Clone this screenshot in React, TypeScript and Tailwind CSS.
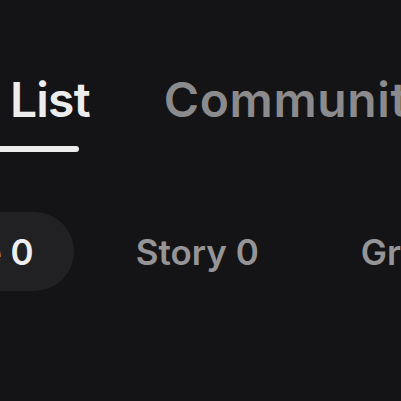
const tabs = [
  { title: "List", active: true },
  { title: "Community", active: false },
];

const filters = [
  { title: "Article", count: 0, active: true },
  { title: "Story", count: 0, active: false },
  { title: "Group", count: 0, active: false },
];

export default function App() {
  return (
    <div
      className="h-[401px] w-[401px] overflow-hidden bg-[#141416]"
      style={{ fontFamily: "Inter, 'Noto Sans', sans-serif" }}
    >
      {/* Tabs */}
      <div className="flex gap-[74px] whitespace-nowrap pl-[10px] pt-[76px]">
        {tabs.map(({ title, active }) => (
          <div key={title} className="relative">
            <span
              className={`block text-[48px] font-semibold leading-none ${
                active
                  ? "tracking-[-0.8px] text-[#ededed]"
                  : "tracking-[0.6px] text-[#8b8b8d]"
              }`}
            >
              {title}
            </span>
            {active && (
              <div className="absolute left-[-40px] top-[70px] h-[6px] w-[109px] rounded-full bg-[#ececec]" />
            )}
          </div>
        ))}
      </div>

      {/* Filters */}
      <div className="mt-[88px] ml-[-150px] flex gap-[22px] whitespace-nowrap">
        {filters.map(({ title, count, active }) => (
          <div
            key={title}
            className={`flex h-[79px] items-center rounded-full px-[40px] text-[35px] font-semibold leading-[40px] ${
              active ? "bg-[#212123] text-[#efefef]" : "text-[#959597]"
            }`}
          >
            {title} {count}
          </div>
        ))}
      </div>
    </div>
  );
}
